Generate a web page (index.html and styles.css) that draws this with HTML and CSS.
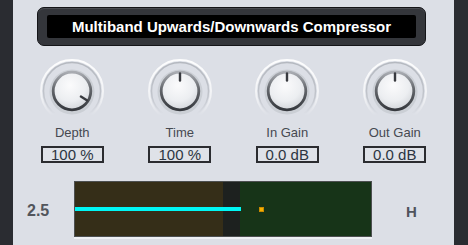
FILE: index.html
```html
<!DOCTYPE html>
<html lang="en">
<head>
    <meta charset="UTF-8">
    <title>Multiband Upwards/Downwards Compressor</title>
    <link rel="stylesheet" href="styles.css">
</head>
<body>
    <svg class="defs" width="0" height="0">
        <defs>
            <linearGradient id="haloFade" x1="0" y1="0" x2="0" y2="1">
                <stop offset="0" stop-color="#ffffff" stop-opacity="0.95"/>
                <stop offset="0.6" stop-color="#ffffff" stop-opacity="0.6"/>
                <stop offset="0.9" stop-color="#ffffff" stop-opacity="0"/>
            </linearGradient>
            <linearGradient id="haloGrey" x1="0" y1="0" x2="0" y2="1">
                <stop offset="0" stop-color="#b0b4bb" stop-opacity="0.9"/>
                <stop offset="0.6" stop-color="#b0b4bb" stop-opacity="0.6"/>
                <stop offset="0.9" stop-color="#b0b4bb" stop-opacity="0"/>
            </linearGradient>
            <radialGradient id="capFill" cx="0.45" cy="0.35" r="0.7">
                <stop offset="0" stop-color="#fbfbfc"/>
                <stop offset="0.6" stop-color="#eceef1"/>
                <stop offset="1" stop-color="#cfd2d7"/>
            </radialGradient>
            <linearGradient id="rimShade" x1="0" y1="0" x2="0" y2="1">
                <stop offset="0" stop-color="#a9acb2"/>
                <stop offset="0.45" stop-color="#64676c"/>
                <stop offset="1" stop-color="#36393e"/>
            </linearGradient>
            <symbol id="knob" viewBox="0 0 72 70">
                <circle cx="36" cy="39" r="31" fill="none" stroke="url(#haloFade)" stroke-width="2"/>
                <circle cx="36" cy="39" r="28.5" fill="none" stroke="url(#haloGrey)" stroke-width="1.5"/>
                <circle cx="36" cy="40" r="22.5" fill="#c3c7cd" opacity="0.7"/>
                <circle cx="36" cy="39" r="18.8" fill="url(#capFill)" stroke="url(#rimShade)" stroke-width="2.8"/>
            </symbol>
        </defs>
    </svg>

    <div class="rack">
        <div class="panel">
            <div class="title-frame">
                <div class="title-screen">Multiband Upwards/Downwards Compressor</div>
            </div>

            <div class="knob-row">
                <div class="control">
                    <svg class="knob" width="72" height="70" viewBox="0 0 72 70">
                        <use href="#knob"/>
                        <line x1="36" y1="28.5" x2="36" y2="21.5" transform="rotate(122 36 39)"/>
                    </svg>
                    <div class="label">Depth</div>
                    <div class="value">100 %</div>
                </div>
                <div class="control">
                    <svg class="knob" width="72" height="70" viewBox="0 0 72 70">
                        <use href="#knob"/>
                        <line x1="36" y1="28.5" x2="36" y2="21.5"/>
                    </svg>
                    <div class="label">Time</div>
                    <div class="value">100 %</div>
                </div>
                <div class="control">
                    <svg class="knob" width="72" height="70" viewBox="0 0 72 70">
                        <use href="#knob"/>
                        <line x1="36" y1="28.5" x2="36" y2="21.5"/>
                    </svg>
                    <div class="label">In Gain</div>
                    <div class="value">0.0 dB</div>
                </div>
                <div class="control">
                    <svg class="knob" width="72" height="70" viewBox="0 0 72 70">
                        <use href="#knob"/>
                        <line x1="36" y1="28.5" x2="36" y2="21.5"/>
                    </svg>
                    <div class="label">Out Gain</div>
                    <div class="value">0.0 dB</div>
                </div>
            </div>

            <div class="meter-row">
                <div class="scale">2.5</div>
                <div class="meter">
                    <div class="zone-low"></div>
                    <div class="zone-gap"></div>
                    <div class="zone-high"></div>
                    <div class="trace"></div>
                    <div class="marker"></div>
                </div>
                <div class="band">H</div>
            </div>
        </div>
    </div>
</body>
</html>
```

FILE: styles.css
```css
html, body {
    margin: 0;
    padding: 0;
}
body {
    width: 468px;
    height: 245px;
    overflow: hidden;
    background: #2a2c31;
    font-family: "Liberation Sans", Arial, sans-serif;
}
.defs {
    position: absolute;
    width: 0;
    height: 0;
}
.rack {
    display: flex;
    height: 245px;
    padding-left: 13px;
}
.panel {
    width: 441px;
    height: 245px;
    background: #dcdfe6;
    overflow: hidden;
}

/* title display */
.title-frame {
    margin: 7px 0 0 24px;
    width: 389px;
    height: 39px;
    box-sizing: border-box;
    padding: 7px 9px 8px 9px;
    background: #34363b;
    border: 1px solid #141518;
    border-radius: 7px;
    box-shadow: inset 0 1px 0 #4a4c52;
}
.title-screen {
    height: 23px;
    background: #000;
    border-radius: 2px;
    color: #fff;
    font-weight: bold;
    font-size: 15px;
    line-height: 24px;
    text-align: center;
}

/* knobs */
.knob-row {
    display: grid;
    grid-template-columns: repeat(4, 107.5px);
    margin: 6px 0 0 5.5px;
}
.control {
    display: flex;
    flex-direction: column;
    align-items: center;
}
.knob {
    display: block;
}
.knob line {
    stroke: #383a3f;
    stroke-width: 2.4;
    stroke-linecap: round;
}
.label {
    margin-top: 3px;
    font-size: 13px;
    line-height: 15px;
    color: #464951;
}
.value {
    margin-top: 6px;
    width: 63px;
    height: 17px;
    box-sizing: border-box;
    border: 2px solid #2b2c30;
    font-size: 15px;
    line-height: 13px;
    text-align: center;
    color: #2c3542;
    background: #dfe2e8;
}

/* meter */
.meter-row {
    display: flex;
    align-items: center;
    margin-top: 18px;
}
.scale {
    width: 61px;
    padding-left: 14px;
    padding-top: 4px;
    box-sizing: border-box;
    font-size: 16px;
    font-weight: bold;
    color: #52555c;
}
.meter {
    position: relative;
    display: flex;
    width: 298px;
    height: 56px;
    box-sizing: border-box;
    border: 1px solid #4c4f50;
    box-shadow: 0 2px 0 #eef0f4;
}
.zone-low {
    width: 148px;
    background: #352e18;
}
.zone-gap {
    width: 17px;
    background: #1d211f;
}
.zone-high {
    flex: 1;
    background: #173418;
}
.trace {
    position: absolute;
    left: 0;
    top: 25px;
    width: 166px;
    height: 4px;
    background: #00f6f4;
}
.marker {
    position: absolute;
    left: 184px;
    top: 25px;
    width: 5px;
    height: 5px;
    box-sizing: border-box;
    background: #f6b000;
    border: 1px solid #c98a00;
}
.band {
    margin-left: 34px;
    padding-top: 4px;
    font-size: 15px;
    font-weight: bold;
    color: #50535c;
}
```
